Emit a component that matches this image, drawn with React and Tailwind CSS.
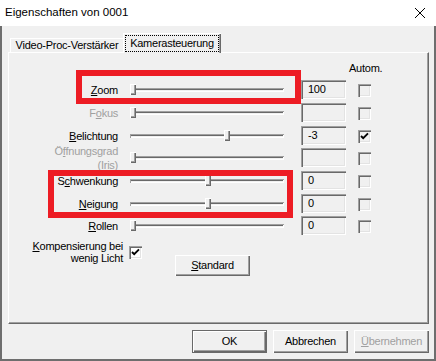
import React from 'react'

const RAISED = 'shadow-[inset_1px_1px_0_#ffffff,inset_-1px_-1px_0_#696969,inset_-2px_-2px_0_#a0a0a0]'
const SUNKEN = 'shadow-[inset_1px_1px_0_#a0a0a0,inset_2px_2px_0_#696969,inset_-1px_-1px_0_#ffffff,inset_-2px_-2px_0_#e3e3e3]'

const Check = () => (
  <svg width="13" height="13" viewBox="0 0 13 13" className="block">
    <path d="M3 6 L5.2 8.2 L10 3.4" fill="none" stroke="#000" strokeWidth="1.9" />
  </svg>
)

const CheckBox = ({ checked, white }) => (
  <div className={`w-[13px] h-[13px] ${white ? 'bg-white' : 'bg-[#f0f0f0]'} ${SUNKEN}`}>
    {checked && <Check />}
  </div>
)

// label with underlined mnemonic letter
const Mn = ({ pre, u, post }) => (
  <>
    {pre}
    <u className="underline-offset-1">{u}</u>
    {post}
  </>
)

const Row = ({ label, disabled, thumb, value, checked, h }) => (
  <div className={`flex items-start ${h}`}>
    <div
      className={`w-[109px] h-[19px] flex items-center justify-end text-right leading-[14px] ${
        disabled ? 'text-[#a0a0a0]' : 'text-black'
      }`}
    >
      <span className="mt-[1px]">{label}</span>
    </div>
    {/* slider */}
    <div className="relative ml-[6px] w-[166px] h-[19px] flex items-center px-[6px]">
      <div className="w-full h-[4px] bg-[#f0f0f0] shadow-[inset_1px_1px_0_#a0a0a0,inset_-1px_-1px_0_#ffffff,inset_0_2px_0_#696969]" />
      {thumb !== undefined && (
        <div
          className={`absolute top-[4px] w-[6px] h-[11px] bg-[#f0f0f0] ${RAISED}`}
          style={{ left: thumb }}
        />
      )}
    </div>
    {/* value box */}
    <div className={`ml-[11px] w-[45px] h-[19px] flex items-center pl-[7px] bg-[#f0f0f0] ${SUNKEN}`}>
      {value}
    </div>
    <div className="ml-[12px] mt-[4px]">
      <CheckBox checked={checked} />
    </div>
  </div>
)

const Button = ({ children, disabled, w = 'w-[75px]', h = 'h-[23px]', extra = '' }) => (
  <div
    className={`${w} ${h} flex items-center justify-center bg-[#f0f0f0] ${RAISED} ${extra} ${
      disabled ? 'text-[#a0a0a0]' : 'text-black'
    }`}
  >
    {children}
  </div>
)

const App = () => {
  return (
    <div className="relative w-[436px] h-[361px] bg-[#f0f0f0] text-[11px] tracking-[-0.25px] text-black font-['Liberation_Sans',Arial,sans-serif] overflow-hidden">
      {/* title bar */}
      <div className="h-[26px] bg-white flex items-center justify-between pl-[5px] pr-[10px]">
        <span className="text-[11.5px] tracking-normal">Eigenschaften von 0001</span>
        <svg width="12" height="12" viewBox="0 0 12 12">
          <path d="M1 1 L11 11 M11 1 L1 11" stroke="#000" strokeWidth="1" fill="none" />
        </svg>
      </div>

      {/* body */}
      <div className="h-[335px] border-x-2 border-b-2 border-[#6e6e6e] pl-[6px] pr-[5px] pt-[7px]">
        {/* tabs */}
        <div className="h-[19px] flex items-end pl-[2px] relative z-10">
          <div className="w-[113px] h-[14px] flex items-center justify-center border-t border-l border-white">
            Video-Proc-Verstärker
          </div>
          <div className="w-[98px] h-[20px] -mb-[1px] bg-[#f0f0f0] border-t border-l border-white shadow-[inset_-1px_0_0_#696969,inset_-2px_0_0_#a0a0a0] pt-[1px] pl-[1px]">
            <div className="w-[94px] h-[17px] flex items-center justify-center border border-dotted border-black">
              Kamerasteuerung
            </div>
          </div>
        </div>

        {/* panel */}
        <div className="h-[272px] border border-white border-r-[#696969] border-b-[#696969] shadow-[inset_-1px_-1px_0_#a0a0a0]">
          <div className="mt-[9px] ml-[340px] h-[13px] leading-[13px]">Autom.</div>
          <div className="mt-[5px]">
            <Row h="h-[23px]" label={<Mn u="Z" post="oom" />} thumb={6} value="100" />
            <Row h="h-[23px]" label={<Mn pre="F" u="o" post="kus" />} disabled thumb={6} />
            <Row h="h-[22px]" label={<Mn u="B" post="elichtung" />} thumb={100} value="-3" checked />
            <Row
              h="h-[23px]"
              label={
                <>
                  <Mn pre="Ö" u="f" post="fnungsgrad" />
                  <br />
                  (Iris)
                </>
              }
              disabled
              thumb={6}
            />
            <Row h="h-[23px]" label={<Mn pre="S" u="c" post="hwenkung" />} thumb={81} value="0" />
            <Row h="h-[22px]" label={<Mn u="N" post="eigung" />} thumb={81} value="0" />
            <Row h="h-[23px]" label={<Mn u="R" post="ollen" />} thumb={6} value="0" />
          </div>
          <div className="flex items-start">
            <div className="w-[114px] mt-[1px] text-right leading-[12px]">
              <Mn u="K" post="ompensierung bei" />
              <br />
              wenig Licht
            </div>
            <div className="ml-[6px] mt-[7px]">
              <CheckBox checked white />
            </div>
            <Button h="h-[21px]" extra="ml-[33px] mt-[16px]">
              <Mn u="S" post="tandard" />
            </Button>
          </div>
        </div>

        {/* dialog buttons */}
        <div className="mt-[6px] flex justify-end gap-[6px]">
          <Button extra="border border-[#696969]">OK</Button>
          <Button>Abbrechen</Button>
          <Button disabled>
            <Mn u="Ü" post="bernehmen" />
          </Button>
        </div>
      </div>

      {/* red annotation boxes */}
      <div className="absolute left-[76px] top-[70px] w-[225px] h-[34px] border-[6px] border-[#ed1c24]" />
      <div className="absolute left-[48px] top-[170px] w-[245px] h-[48px] border-[6px] border-[#ed1c24]" />
    </div>
  )
}

export default App
